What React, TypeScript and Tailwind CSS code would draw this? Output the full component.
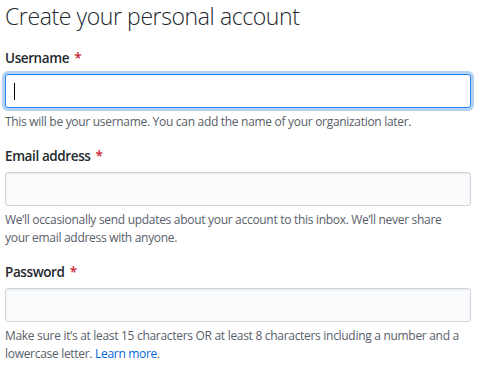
import React from 'react'

const Field = ({ label, focused, children }: { label: string; focused?: boolean; children: React.ReactNode }) => (
  <div className="flex flex-col">
    <label className="text-[13.5px] font-semibold text-[#24292e] leading-[20px] tracking-[-0.4px] mb-[6px]">
      {label} <span className="text-[#cb2431] ml-[2px]">*</span>
    </label>
    {focused ? (
      <div className="h-[34px] w-[466px] rounded-[3px] border border-[#2188ff] bg-white shadow-[0_0_0_3px_rgba(3,102,214,0.3)] flex items-center px-2">
        <span className="w-px h-[17px] bg-black" />
      </div>
    ) : (
      <div className="h-[34px] w-[466px] rounded-[3px] border border-[#d1d5da] bg-[#fafbfc] shadow-[inset_0_1px_2px_rgba(27,31,35,0.075)]" />
    )}
    <p className="text-[12px] text-[#586069] leading-[18px] tracking-[-0.3px] mt-[5px] pr-3">{children}</p>
  </div>
)

export default function App() {
  return (
    <div className="w-[481px] h-[385px] bg-white px-[5px] pt-[1px] font-['Segoe_UI','Open_Sans',sans-serif] overflow-hidden">
      <h1 className="text-[23px] font-light text-[#24292e] leading-[30px] tracking-[-0.4px]">Create your personal account</h1>
      <div className="flex flex-col gap-[15px] mt-[17px]">
        <Field label="Username" focused>
          This will be your username. You can add the name of your organization later.
        </Field>
        <Field label="Email address">
          We’ll occasionally send updates about your account to this inbox. We’ll never share your email address with anyone.
        </Field>
        <Field label="Password">
          Make sure it’s at least 15 characters OR at least 8 characters including a number and a lowercase letter.{' '}
          <a className="text-[#0366d6]">Learn more</a>.
        </Field>
      </div>
    </div>
  )
}
